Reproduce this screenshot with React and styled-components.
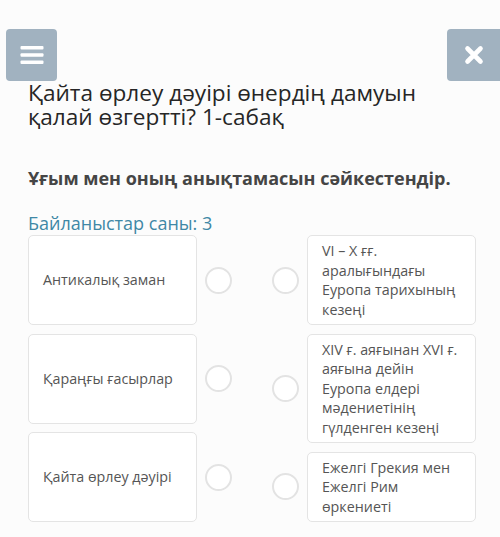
import React from "react";
import styled, { createGlobalStyle } from "styled-components";

const GlobalStyle = createGlobalStyle`
  html, body {
    margin: 0;
    padding: 0;
    background: #fcfcfc;
  }
  body {
    font-family: "Open Sans", "Noto Sans", sans-serif;
    color: #333;
  }
`;

const Page = styled.div`
  width: 500px;
  min-height: 537px;
  overflow: hidden;
`;

const TopBar = styled.header`
  display: flex;
  justify-content: space-between;
  align-items: flex-start;
  padding: 29px 0 0 6px;
`;

const IconButton = styled.button`
  display: flex;
  align-items: center;
  justify-content: center;
  width: ${(p) => p.$w}px;
  height: 52px;
  padding: 0;
  border: none;
  border-radius: ${(p) => (p.$edge ? "4px 0 0 4px" : "4px")};
  background: #a1b2c0;
  cursor: pointer;
`;

const Title = styled.h1`
  margin: 0 40px 0 28px;
  font-size: 22.6px;
  line-height: 24px;
  font-weight: 400;
  color: #262626;
`;

const Instruction = styled.p`
  margin: 38px 0 0 28px;
  font-size: 18px;
  line-height: 23px;
  font-weight: 700;
  color: #454545;
`;

const Count = styled.p`
  margin: 21px 0 0 28px;
  font-size: 18px;
  line-height: 24px;
  color: #3f88a6;
`;

const Board = styled.div`
  display: flex;
  gap: 40px;
  padding-left: 28px;
`;

const Column = styled.div`
  display: flex;
  flex-direction: column;
  gap: 8.5px;
  width: 204px;
`;

const Item = styled.div`
  display: flex;
  flex-direction: ${(p) => (p.$side === "right" ? "row-reverse" : "row")};
  align-items: center;
  gap: 8px;
  flex: ${(p) => (p.$grow ? 1 : "none")};
`;

const Card = styled.div`
  box-sizing: border-box;
  width: 169px;
  align-self: stretch;
  display: flex;
  align-items: center;
  padding: 5px 12px 5px 14px;
  border: 1px solid #e4e4e4;
  border-radius: 5px;
  background: #fff;
  font-size: 14.3px;
  line-height: 19.5px;
  color: #555;
`;

const Dot = styled.span`
  box-sizing: border-box;
  flex: none;
  width: 27px;
  height: 27px;
  border: 2.5px solid #e3e3e3;
  border-radius: 50%;
  background: #fff;
`;

const MenuIcon = () => (
  <svg width="24" height="22" viewBox="0 0 24 22">
    <rect x="0.5" y="2" width="23" height="3.6" rx="1" fill="#fff" />
    <rect x="0.5" y="9.2" width="23" height="3.6" rx="1" fill="#fff" />
    <rect x="0.5" y="16.4" width="23" height="3.6" rx="1" fill="#fff" />
  </svg>
);

const CloseIcon = () => (
  <svg width="20" height="20" viewBox="0 0 20 20">
    <path
      d="M3.5 3.5 L16.5 16.5 M16.5 3.5 L3.5 16.5"
      stroke="#fff"
      strokeWidth="4.6"
      strokeLinecap="round"
    />
  </svg>
);

const terms = ["Антикалық заман", "Қараңғы ғасырлар", "Қайта өрлеу дәуірі"];

const definitions = [
  "VI – X ғғ. аралығындағы Еуропа тарихының кезеңі",
  "XIV ғ. аяғынан XVI ғ. аяғына дейін Еуропа елдері мәдениетінің гүлденген кезеңі",
  "Ежелгі Грекия мен Ежелгі Рим өркениеті",
];

export default function App() {
  return (
    <Page>
      <GlobalStyle />
      <TopBar>
        <IconButton $w={51} aria-label="Мәзір">
          <MenuIcon />
        </IconButton>
        <IconButton $w={53} $edge aria-label="Жабу">
          <CloseIcon />
        </IconButton>
      </TopBar>
      <Title>Қайта өрлеу дәуірі өнердің дамуын қалай өзгертті? 1-сабақ</Title>
      <Instruction>Ұғым мен оның анықтамасын сәйкестендір.</Instruction>
      <Count>Байланыстар саны: 3</Count>
      <Board>
        <Column>
          {terms.map((t) => (
            <Item key={t} $grow>
              <Card>{t}</Card>
              <Dot />
            </Item>
          ))}
        </Column>
        <Column>
          {definitions.map((d) => (
            <Item key={d} $side="right">
              <Card>{d}</Card>
              <Dot />
            </Item>
          ))}
        </Column>
      </Board>
    </Page>
  );
}
